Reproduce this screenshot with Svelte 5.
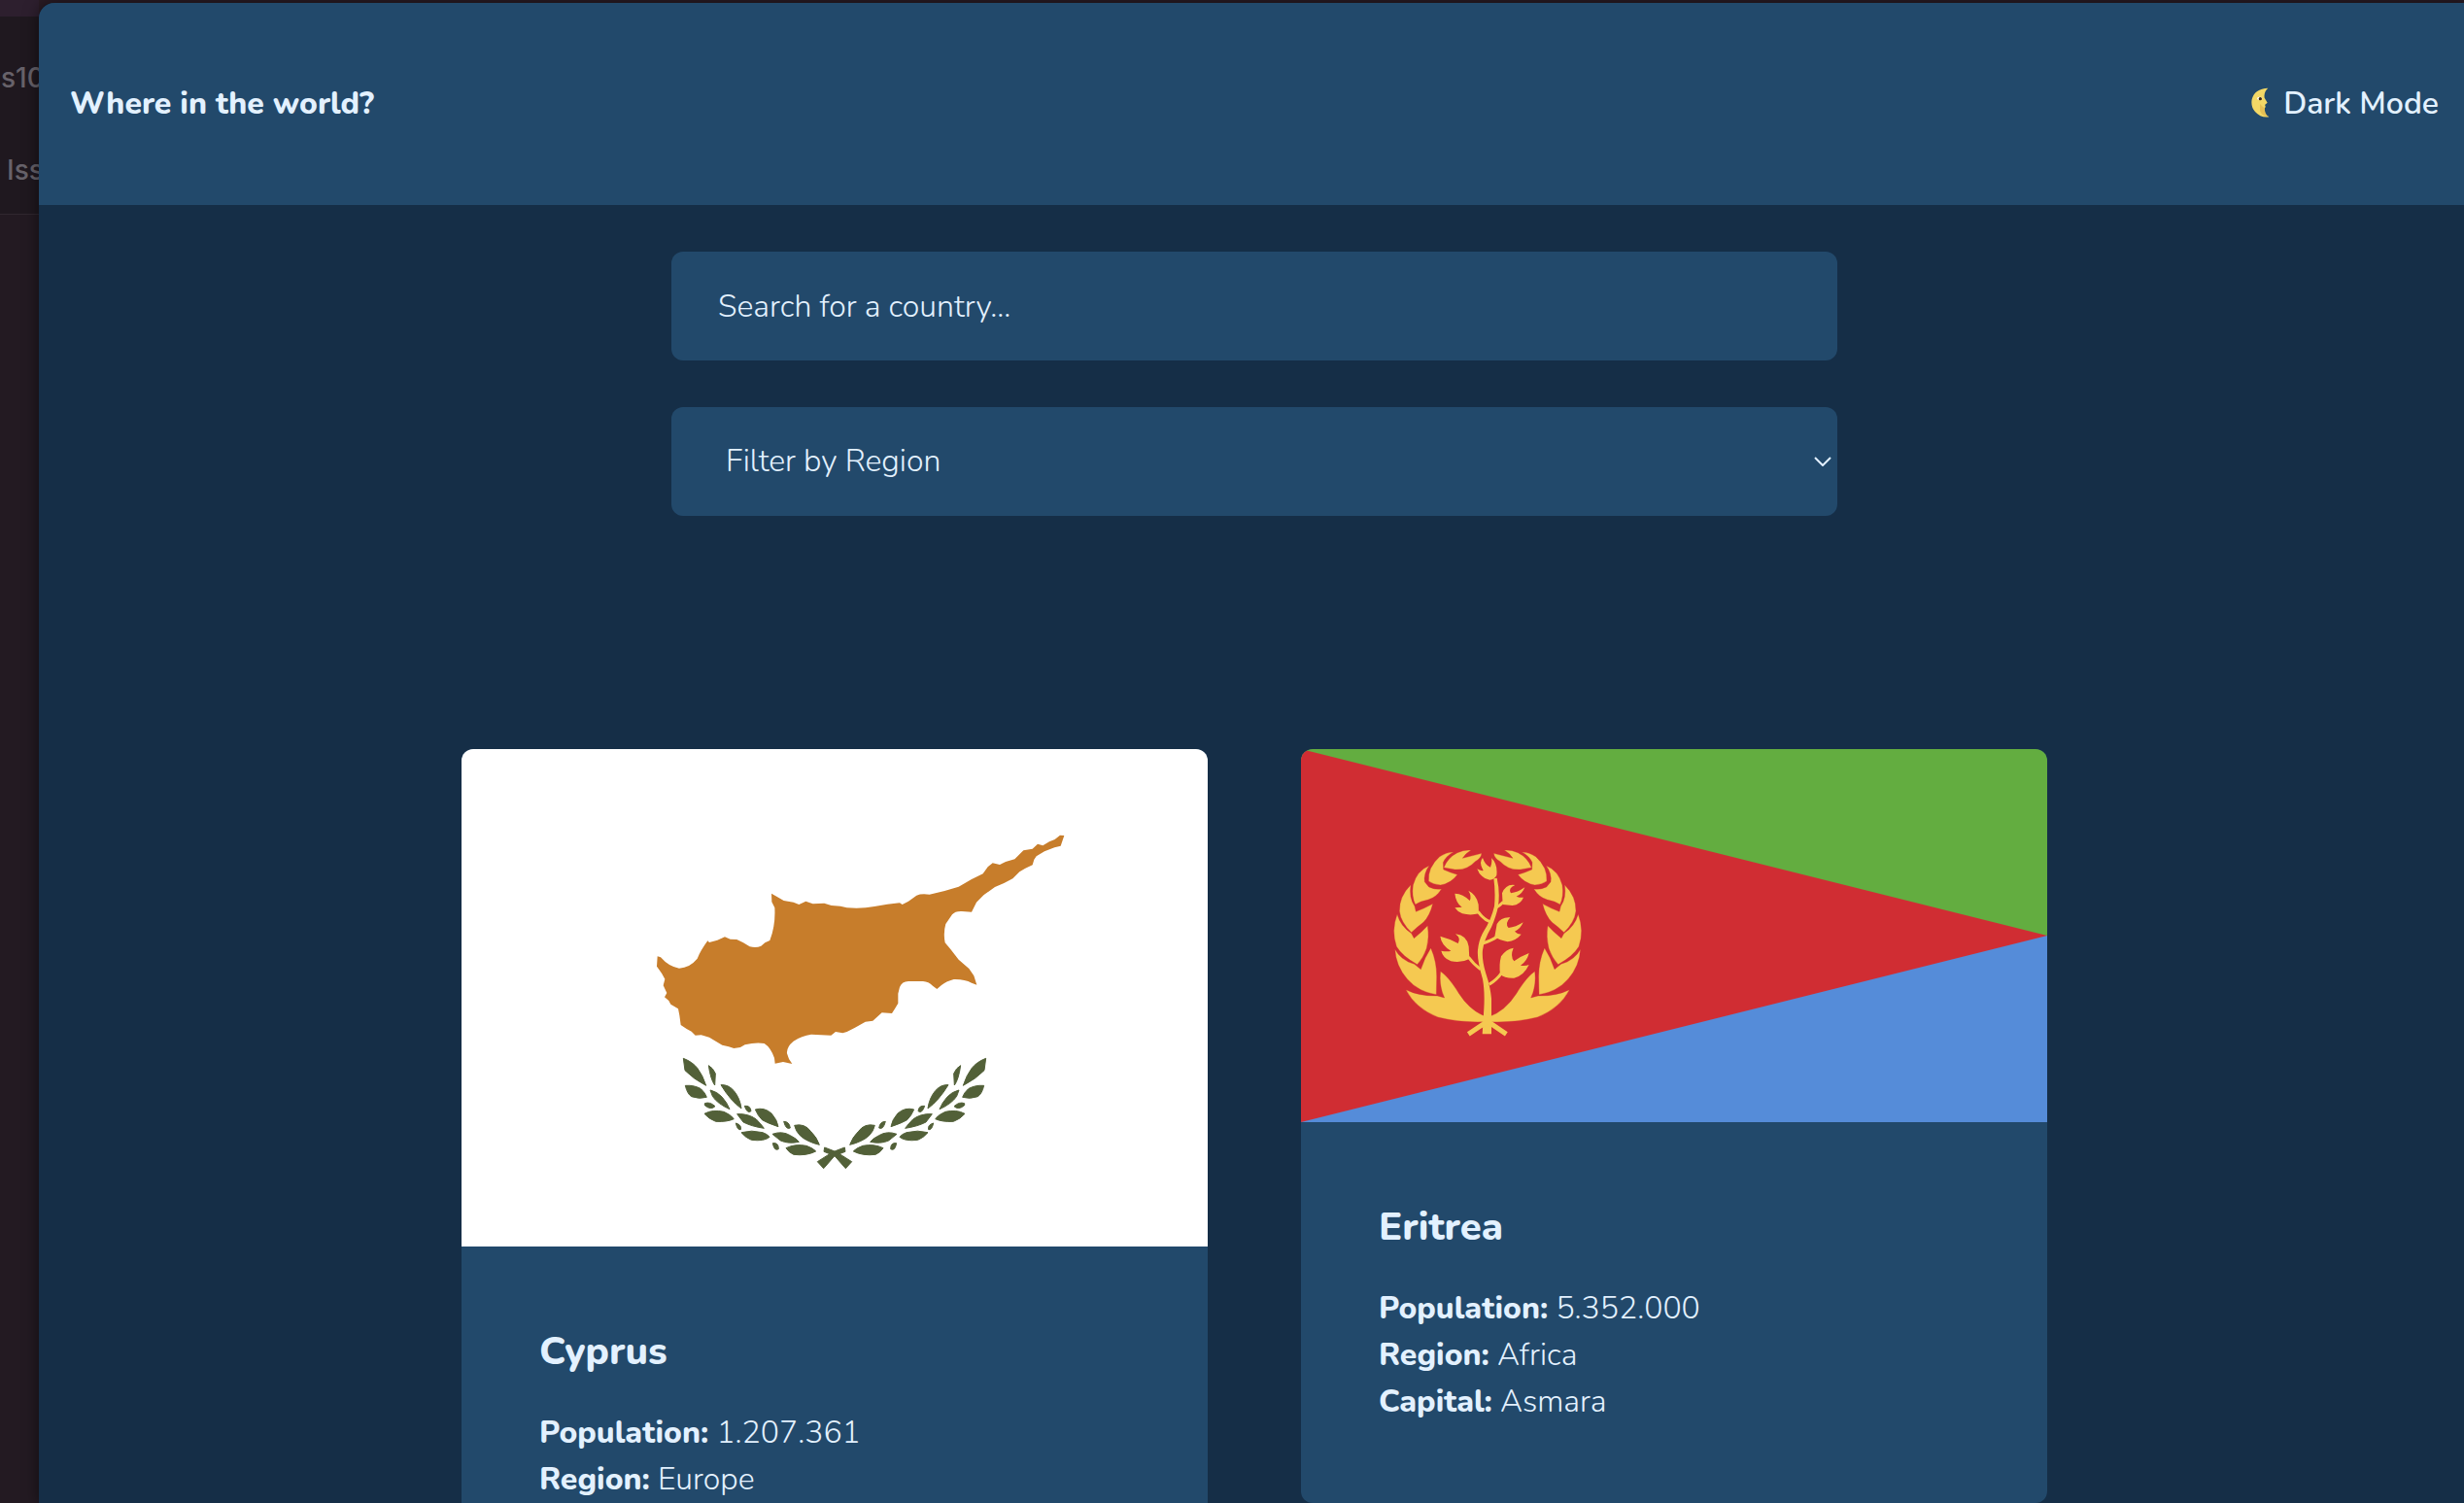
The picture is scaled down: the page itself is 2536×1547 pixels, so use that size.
<script>
  const regions = ['Africa', 'Americas', 'Asia', 'Europe', 'Oceania'];
  const countries = [
    { name: 'Cyprus', population: '1.207.361', region: 'Europe', capital: 'Nicosia' },
    { name: 'Eritrea', population: '5.352.000', region: 'Africa', capital: 'Asmara' }
  ];
  const oliveLeaves = [
    'M100 55Q128 66 143 85Q160 107 170 139Q130 118 105 92Z',
    'M178 77Q192 85 199 102L197 138Q184 120 178 77Z',
    'M106 139Q135 137 155 150Q168 162 172 175Q150 182 125 173Q112 165 106 139Z',
    'M183 153Q205 158 220 175Q235 192 243 212Q205 195 190 172Z',
    'M216 137Q238 135 256 155Q275 178 279 210Q245 185 216 137Z',
    'M166 194Q182 188 198 203Q185 216 166 200Z',
    'M165 226Q190 212 225 220Q245 228 256 242Q235 252 200 250Q178 242 165 226Z',
    'M266 227Q300 225 325 243Q340 258 349 271Q310 265 285 252Z',
    'M322 213Q350 205 372 225Q390 245 393 266Q360 255 343 245Q330 232 322 213Z',
    'M289 202Q307 200 309 218Q297 227 289 202Z',
    'M262 255Q281 261 277 275Q267 278 262 255Z',
    'M279 284Q310 275 345 284Q362 290 366 298Q350 312 310 307Q292 300 279 284Z',
    'M375 289Q405 278 430 293Q450 303 457 313Q425 320 400 309Z',
    'M410 250Q427 250 430 270Q417 277 410 250Z',
    'M443 262Q475 255 493 280Q513 300 520 322Q480 312 460 293Q447 280 443 262Z',
    'M376 317Q394 314 394 335Q381 343 376 317Z',
    'M417 332Q445 318 480 325Q500 332 509 342Q480 357 440 352Q425 345 417 332Z'
  ];
  const laurelLeaves = [
    'M111 503Q150 523 208 522L230 528Q212 490 218 446Q245 465 275 515Q310 570 363 588V602Q280 606 210 588Q140 560 111 503Z',
    'M77 378Q95 412 137 424L157 440Q168 405 188 374Q208 420 206 470L205 518Q150 510 115 470Q80 430 77 378Z',
    'M84 270Q95 308 128 329L136 344Q160 325 178 305Q184 340 175 375Q165 405 146 425Q100 400 82 370Q65 320 84 270Z',
    'M126 179Q120 220 138 245L142 262Q168 252 194 238Q185 275 165 295Q145 310 128 326Q95 295 91 260Q90 215 126 179Z',
    'M183 120Q165 145 169 170L182 186Q200 195 221 192Q205 218 180 225Q155 230 140 240Q128 215 133 180Q145 135 183 120Z',
    'M258 78Q235 90 226 110L227 132Q250 142 270 148Q250 175 218 180Q195 178 181 168Q178 125 215 92Q235 78 258 78Z',
    'M312 72Q295 82 286 97L345 82Q343 98 325 107Q300 135 262 132L228 126Q240 95 270 80Q290 70 312 72Z'
  ];
  const flowers = [
    'M331 130Q342 137 350 135Q335 110 348 96Q355 118 372 125Q378 110 375 96Q395 115 391 150Q385 162 370 164Q340 158 331 130Z',
    'M262 206Q288 207 308 228Q315 215 304 197Q330 210 335 240L336 268Q310 275 285 268Q270 262 262 250L284 248Q265 235 262 206Z',
    'M448 180Q425 190 435 205Q455 203 478 187Q470 208 452 215Q465 220 474 218Q465 240 440 243L410 240L408 205Q420 175 448 180Z',
    'M433 280Q415 300 428 312Q450 310 473 295Q465 315 447 323Q455 332 467 332Q450 352 425 355Q400 350 385 340L392 300Q405 278 433 280Z',
    'M217 338Q245 345 272 360Q282 345 264 331Q300 335 305 370L307 408Q280 422 250 415Q225 405 220 383Q240 387 250 383Q220 365 217 338Z',
    'M443 374Q432 400 445 415Q465 400 491 390Q485 415 465 428Q480 430 491 426Q475 460 445 467Q415 468 402 455Q398 425 405 400Q420 378 443 374Z'
  ];
</script>

<div class="desktop">
  <aside class="behind" aria-hidden="true">
    <div class="tabs"></div>
    <div class="bar">
      <span>s10</span>
      <span class="indented">Iss</span>
    </div>
  </aside>

  <div class="window">
    <header>
      <h1>Where in the world?</h1>
      <button type="button">
        <svg class="moon" viewBox="110 118 57 93" aria-hidden="true">
          <path fill="#f3d866" d="M162 120Q148 132 151 150L160 165L152 172Q156 177 152 182Q150 200 165 209Q140 213 122 193Q108 178 112 155Q120 122 162 120Z" />
          <path fill="#d9a842" d="M137 169Q145 178 152 182Q150 200 165 209Q144 208 137 190Z" opacity=".5" />
          <ellipse cx="136" cy="152" rx="8" ry="5" fill="#fff" />
          <circle cx="138" cy="153" r="5" fill="#3d2a16" />
        </svg>
        Dark Mode
      </button>
    </header>

    <main>
      <form>
        <input type="text" aria-label="Search for a country" placeholder="Search for a country..." />
        <div class="select">
          <select aria-label="Filter by Region">
            <option>Filter by Region</option>
            {#each regions as region}
              <option>{region}</option>
            {/each}
          </select>
          <svg viewBox="0 0 18 10" aria-hidden="true"><path d="M1 1L9 9L17 1" /></svg>
        </div>
      </form>

      <section class="cards">
        {#each countries as country}
          <article>
            {#if country.name === 'Cyprus'}
              <svg class="flag" viewBox="0 0 768 512" role="img" aria-label="Flag of Cyprus">
                <rect width="768" height="512" fill="#fff" />
                <path
                  transform="translate(175 70) scale(.33333)"
                  fill="#c77d2b"
                  d="M1336 57L1325 89L1306 94L1275 106L1250 121L1243 131L1238 148L1216 158L1198 169L1177 190L1150 204L1122 216L1088 240L1065 263L1050 293L1020 291Q999 290 990 301L970 330Q962 358 968 388L985 408L1010 440L1042 468L1057 490L1066 518L1050 512Q1028 500 995 501Q971 507 957 519L943 531L930 521Q917 508 900 507H855Q835 507 828 525L823 545V575L814 590L804 606L773 604L745 629L722 632L690 650L665 663L652 667L630 663L616 674L555 671Q525 675 500 692Q478 710 480 730Q484 748 496 762L468 756L443 761L441 744Q430 712 410 699Q385 694 350 703L336 711L316 714L300 709L280 704L260 692L240 680L215 673L197 674L185 662L170 654L152 642L148 612L144 592L121 578L115 567L102 556L109 543L98 520L103 500L93 482L78 461L80 430L90 433Q115 462 147 467Q180 465 203 437Q213 412 235 382L240 387L265 380L288 370L305 377L325 378L345 388L365 400Q385 405 400 398L412 388L427 381Q445 335 442 280L433 262L432 236L444 243L470 258L500 263L517 270L538 260L560 268L595 266L617 273L645 275L665 280Q710 284 750 276L790 269L828 265L836 270L855 260L880 242Q895 235 920 239Q970 228 1010 215L1050 192L1085 175L1100 154L1115 142L1137 147L1155 138L1183 130L1210 103L1238 98L1254 83L1270 88L1290 76L1307 69L1323 56Z"
                />
                <g transform="translate(195 300) scale(.33333)" fill="#526038" stroke="#526038" stroke-width="3">
                  {#each oliveLeaves as d}
                    <path {d} />
                    <path {d} transform="translate(1134 0) scale(-1 1)" />
                  {/each}
                  <path d="M536 330L567 342L598 330L600 343L582 350L620 374L601 395L567 356L533 395L514 374L552 350L534 343Z" />
                </g>
              </svg>
            {:else}
              <svg class="flag" viewBox="0 0 768 384" role="img" aria-label="Flag of Eritrea">
                <path fill="#63ad40" d="M0 0H768V192H0Z" />
                <path fill="#558cd9" d="M0 192H768V384H0Z" />
                <path fill="#d02d33" d="M0 0L768 192L0 384Z" />
                <g transform="translate(71 80) scale(.33333)" fill="#f5c951">
                  {#each laurelLeaves as d}
                    <path {d} stroke="#d02d33" stroke-width="1" />
                    <path {d} stroke="#d02d33" stroke-width="1" transform="translate(727 0) scale(-1 1)" />
                  {/each}
                  {#each flowers as d}
                    <path {d} />
                  {/each}
                  <path d="M347 640L352 560Q355 510 348 470Q330 410 333 380Q336 350 350 325Q375 285 384 245Q388 200 382 160L392 158Q402 200 396 245Q390 275 375 310Q352 350 348 380Q345 410 357 450Q371 490 375 530V640Z" />
                  <path fill="none" stroke="#f5c951" stroke-width="9" d="M370 293Q350 285 334 262M388 250Q400 245 412 232M348 360Q375 352 392 340M342 440Q320 425 304 402M368 487Q392 472 406 452" />
                  <path fill="none" stroke="#f5c951" stroke-width="15" d="M370 596L304 640M356 596L421 640" />
                </g>
              </svg>
            {/if}
            <div class="details">
              <h2>{country.name}</h2>
              <p><strong>Population:</strong> {country.population}</p>
              <p><strong>Region:</strong> {country.region}</p>
              <p><strong>Capital:</strong> {country.capital}</p>
            </div>
          </article>
        {/each}
      </section>
    </main>
  </div>
</div>

<style>
  :global(body) {
    margin: 0;
    background: #231a22;
  }
  .desktop {
    display: grid;
    grid-template-columns: 40px 1fr;
    height: 100vh;
    overflow: hidden;
    background: #2a1c25;
    color: #e3f1ff;
    font-family: Nunito, Lato, sans-serif;
    font-size: 32px;
    line-height: 48px;
  }
  .behind {
    overflow: hidden;
    background: #231a22;
    color: #67626a;
    font: 500 28px/32px Inter, sans-serif;
  }
  .tabs {
    height: 17px;
    background: #2d1f2e;
  }
  .bar {
    display: flex;
    flex-direction: column;
    gap: 63px;
    height: 140px;
    padding: 47px 0 16px 1px;
    border-bottom: 1px solid #30272f;
    background: #1f181f;
  }
  .indented {
    padding-left: 6px;
  }
  .window {
    z-index: 1;
    margin: 3px -6px 0 0;
    border-radius: 16px 0 0 0;
    overflow: hidden;
    background: #152e47;
    box-shadow: 0 0 16px #0008;
  }
  header {
    display: flex;
    align-items: center;
    justify-content: space-between;
    padding: 80px 32px;
    background: #22496b;
  }
  h1,
  h2,
  p {
    margin: 0;
  }
  h1 {
    font-size: 32px;
    font-weight: 800;
  }
  button {
    display: flex;
    align-items: center;
    gap: 14px;
    padding: 0;
    border: 0;
    background: none;
    color: inherit;
    font: inherit;
    font-weight: 600;
  }
  .moon {
    width: 19px;
    height: 31px;
    margin-bottom: 4px;
  }
  form {
    display: grid;
    gap: 48px;
    width: 1200px;
    max-width: 100%;
    margin: 48px auto 240px;
  }
  input,
  select {
    box-sizing: border-box;
    display: block;
    width: 100%;
    height: 112px;
    padding: 0 48px;
    border: 0;
    border-radius: 12px;
    background: #22496b;
    color: inherit;
    font: inherit;
    font-weight: 300;
    appearance: none;
  }
  input::placeholder {
    color: inherit;
    opacity: 1;
  }
  .select {
    position: relative;
  }
  select {
    padding: 0 56px;
  }
  .select svg {
    position: absolute;
    top: 51px;
    right: 6px;
    width: 18px;
    height: 10px;
    fill: none;
    stroke: #e3f1ff;
    stroke-width: 2;
    pointer-events: none;
  }
  .cards {
    display: grid;
    grid-template-columns: repeat(2, minmax(0, 768px));
    justify-content: center;
    align-items: start;
    gap: 96px;
  }
  article {
    border-radius: 12px;
    overflow: hidden;
    background: #22496b;
    font-weight: 300;
  }
  .flag {
    display: block;
    width: 100%;
  }
  .details {
    padding: 80px;
  }
  h2 {
    margin-bottom: 32px;
    font-size: 40px;
    font-weight: 800;
    line-height: 56px;
  }
  strong {
    font-weight: 800;
  }
</style>
